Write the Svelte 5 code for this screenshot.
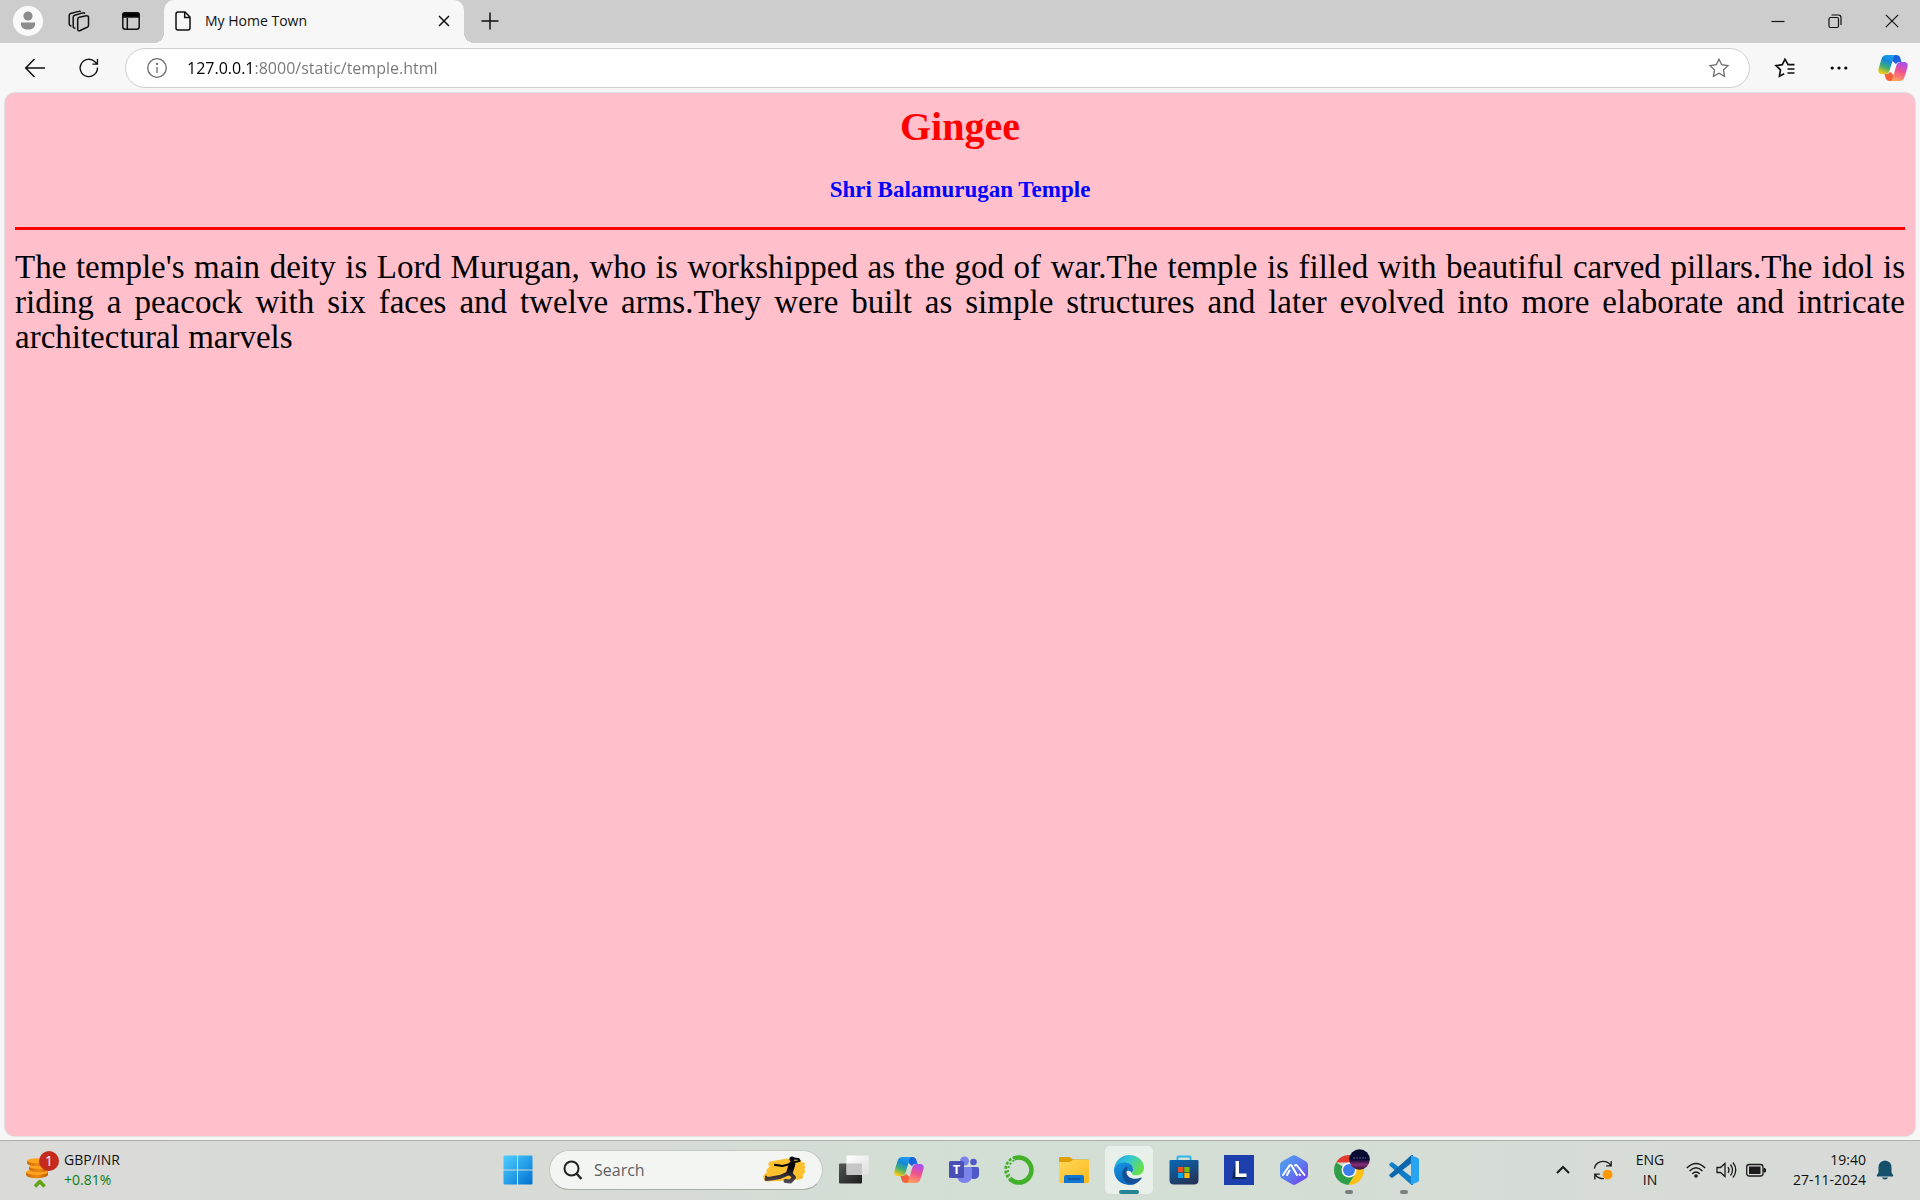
<script>
  let address = $state('127.0.0.1:8000/static/temple.html');
  let query = $state('');
</script>

{#snippet copilot(id)}
  <svg class="i30" viewBox="0 0 30 30" aria-hidden="true">
    <defs>
      <linearGradient id="{id}a" x1="0.6" y1="0" x2="0.2" y2="1">
        <stop offset="0" stop-color="#1b9df0" /><stop offset=".3" stop-color="#1488d8" />
        <stop offset=".62" stop-color="#3fae76" /><stop offset=".95" stop-color="#f2cb12" />
      </linearGradient>
      <linearGradient id="{id}b" x1="0.6" y1="0" x2="0.3" y2="1">
        <stop offset="0" stop-color="#a850f0" /><stop offset=".45" stop-color="#ee5090" />
        <stop offset="1" stop-color="#ffa45c" />
      </linearGradient>
      <linearGradient id="{id}c" x1="0" y1="0" x2="1" y2="1">
        <stop offset="0" stop-color="#1455d8" /><stop offset="1" stop-color="#2272e8" />
      </linearGradient>
    </defs>
    <path d="M14 2h4c3 0 4 1.500 4.700 4l.9 3.200c-3-.4-4.500 0-5.600 2L14.500 8z" fill="url(#{id}c)" />
    <path d="M16 28h-4c-3 0-4-1.500-4.700-4l-.9-3.200c3 .4 4.500 0 5.600-2L15.500 22z" fill="#f4603a" />
    <path d="M8.500 2H18c-1.500.4-2.200 1.500-2.800 3.600L11.600 17.500C10.800 20 9.400 21 7 21H4C.7 21-.3 18.600.6 15.500l3-9.800C4.400 3.200 6 2 8.500 2z" fill="url(#{id}a)" />
    <path d="M21.500 28H12c1.500-.4 2.200-1.500 2.800-3.600l3.600-11.900c.8-2.500 2.200-3.500 4.600-3.500h3c3.300 0 4.300 2.400 3.400 5.500l-3 9.800c-.8 2.500-2.400 3.700-4.900 3.700z" fill="url(#{id}b)" />
  </svg>
{/snippet}

<div class="screen">
  <header class="strip">
    <button class="profile" aria-label="Profile">
      <svg class="i30" viewBox="0 0 30 30"><circle cx="15" cy="15" r="15" fill="#f9f9f9" /><circle cx="15" cy="10" r="4.600" fill="#8c8c8c" /><path d="M8 16.500h14v2c0 3-3 5-7 5s-7-2-7-5z" fill="#8c8c8c" /></svg>
    </button>
    <button class="slot" aria-label="Workspaces">
      <svg class="i22 line" viewBox="0 0 22 22">
        <path d="M11.200 7.200l7-1.400q2.500-.2 2.300 1.600v8q0 1.400-1.300 1.900l-7 3.200q-2.500.8-2.500-1.300V9.200q0-1.600 1.500-2z" />
        <path d="M7.500 18.300q-2.500-.2-2.300-2V7.200q0-1.500 1.500-2l8-2.300q1.600-.4 2.300.7" />
        <path d="M3.500 16.200Q1 15.500 1.200 13.700V5.500q0-1.400 1.400-2l8.200-2.100q1.200-.4 2 .4" />
      </svg>
    </button>
    <button class="slot" aria-label="Tab actions">
      <svg class="i18 line" viewBox="0 0 18 18"><rect x=".8" y="1" width="16.400" height="16.200" rx="2.500" /><path d="M5.300 6v11" /><path d="M.8 5V3Q.8.700 3 .7h12q2.200 0 2.200 2.300v2z" fill="#000" /></svg>
    </button>
    <div class="tab">
      <svg class="page line" viewBox="0 0 16 20"><path d="M10 1H3Q1 1 1 3v14q0 2 2 2h10q2 0 2-2V6zM9.700 1v5.500H15" /></svg>
      <span class="tab-title">My Home Town</span>
      <button class="tab-close" aria-label="Close tab"><svg class="i12 line" viewBox="0 0 12 12"><path d="M1 1l10 10M11 1L1 11" /></svg></button>
    </div>
    <button class="slot" aria-label="New tab"><svg class="i18 line" viewBox="0 0 18 18"><path d="M9 .5v17M.5 9h17" /></svg></button>
    <div class="caption">
      <button aria-label="Minimise"><svg class="i14 line thin" viewBox="0 0 14 14"><path d="M.5 7.500h13" /></svg></button>
      <button aria-label="Restore"><svg class="i14 line thin" viewBox="0 0 14 14"><rect x="1" y="3.500" width="9.500" height="10" rx="1.500" /><path d="M3.500 1h7Q13 1 13 3.500v7.500" /></svg></button>
      <button aria-label="Close"><svg class="i14 line thin" viewBox="0 0 14 14"><path d="M.8.8l12.400 12.400M13.200.8L.8 13.200" /></svg></button>
    </div>
  </header>

  <nav class="toolbar" aria-label="Browser toolbar">
    <button class="tool" aria-label="Back"><svg class="i20 line" viewBox="0 0 20 20"><path d="M9.500 1L.7 10l8.800 9M.7 10H20" /></svg></button>
    <button class="tool" aria-label="Refresh"><svg class="i20 line" viewBox="0 0 22 22"><path d="M20.300 10.500A9.500 9.500 0 1 1 17.500 4.200l2.300 2.200M20.300 1v5.700h-5.600" /></svg></button>
    <div class="address">
      <button aria-label="Site information"><svg class="i20 grey" viewBox="0 0 20 20"><circle cx="10" cy="10" r="9.300" /><path d="M10 9v6" /><circle cx="10" cy="6" r=".5" /></svg></button>
      <input class="url" type="text" aria-label="Address" bind:value={address} />
      <button aria-label="Add to favourites"><svg class="i20 grey" viewBox="0 0 20 20"><path d="M10 1.200l2.700 5.500 6.300.9-4.500 4.300 1 6.300-5.500-3-5.500 3 1-6.300L1 7.600l6.300-.9z" /></svg></button>
    </div>
    <button class="tool" aria-label="Favourites"><svg class="i20 line bold" viewBox="0 0 20 20"><path d="M19.500 6.700h-6.400L10 1.200 7.300 6.700 1 7.600l4.500 4.300-1 6.300 4.700-2.400M12.500 11h7M12.500 15h7" /></svg></button>
    <button class="tool" aria-label="Settings and more"><svg class="i18" viewBox="0 0 18 18"><circle cx="2.200" cy="9" r="1.600" /><circle cx="9" cy="9" r="1.600" /><circle cx="15.800" cy="9" r="1.600" /></svg></button>
    <button class="tool" aria-label="Copilot">{@render copilot('top')}</button>
  </nav>

  <main class="page-view">
    <h1>Gingee</h1>
    <h2>Shri Balamurugan Temple</h2>
    <hr />
    <p>The temple's main deity is Lord Murugan, who is workshipped as the god of war.The temple is filled with beautiful carved pillars.The idol is riding a peacock with six faces and twelve arms.They were built as simple structures and later evolved into more elaborate and intricate architectural marvels</p>
  </main>

  <footer class="taskbar">
    <button class="widget">
      <svg class="coins" viewBox="0 0 34 38" aria-hidden="true">
        <defs><linearGradient id="coin" x1="0" y1="0" x2="1" y2="0"><stop offset="0" stop-color="#c96a08" /><stop offset=".5" stop-color="#ee8a14" /><stop offset="1" stop-color="#c05f00" /></linearGradient></defs>
        <path d="M0 21v3c2 4.500 20 4 22 0v-4z" fill="url(#coin)" /><ellipse cx="11" cy="21" rx="11" ry="3" fill="#ffa21f" />
        <path d="M3 16v2.500c2 3.500 18 3.500 20 0V15z" fill="url(#coin)" /><ellipse cx="13.500" cy="15.500" rx="10.500" ry="2.500" fill="#ffa21f" />
        <path d="M1 10v2.500c2 3.500 18 3.500 20 0V10z" fill="url(#coin)" /><ellipse cx="11" cy="9.800" rx="10" ry="2.500" fill="#ffa21f" />
        <path d="M9 35.500l4.800-5 4.800 5" fill="none" stroke="#62a318" stroke-width="3.500" stroke-linejoin="round" />
        <circle cx="23" cy="10" r="10" fill="#c42b1c" />
        <text x="23" y="15" text-anchor="middle" fill="#fff" font-size="14">1</text>
      </svg>
      <span class="rate"><span>GBP/INR</span><span class="up">+0.81%</span></span>
    </button>

    <div class="apps">
      <button class="app" aria-label="Start">
        <svg class="i30" viewBox="0 0 30 30"><defs><linearGradient id="win" x1="0" y1="0" x2="1" y2="1"><stop offset="0" stop-color="#4fd0ff" /><stop offset="1" stop-color="#0070d2" /></linearGradient></defs><path fill="url(#win)" d="M1.500.5H14v14H.5v-13q0-1 1-1zM15 .5h13.500q1 0 1 1v13H15zM.5 15.500H14v14H1.500q-1 0-1-1zM15 15.500h14.500v13q0 1-1 1H15z" /></svg>
      </button>
      <label class="search">
        <svg class="i20" viewBox="0 0 20 20"><circle cx="8.500" cy="8.500" r="7" fill="none" stroke="#222" stroke-width="2" /><path d="M13.500 13.500l5 5.500" stroke="#222" stroke-width="2.400" /></svg>
        <input type="text" aria-label="Search" placeholder="Search" bind:value={query} />
        <svg class="kick" viewBox="0 0 44 28" aria-hidden="true">
          <defs><linearGradient id="kick" gradientUnits="userSpaceOnUse" x1="0" y1="0" x2="0" y2="28"><stop offset=".4" stop-color="#050505" /><stop offset="1" stop-color="#5a5162" /></linearGradient></defs>
          <path d="M6 6Q13 4 25 2.500q2 0 1 2l11-.5q3 .5 1 2.500l3 0q2 1 0 3 3 1 0 4 2 1 1 3-3 2-2 4 1 2-4 3l-13 1-19 1q-4-.5-3-3l-1-2q2-4 5-4-3-1-1-3 1-2 3-3-3-2-1-4z" fill="#fdc02f" />
          <g fill="none" stroke="url(#kick)" stroke-linecap="round" stroke-linejoin="round"><path d="M27.500 8l-8 2-7.500-1.200" stroke-width="2.200" /><path d="M29 6.500l7.500-1.500-1-2-5-.5" stroke-width="2.200" /><path d="M29 8.500l-2.500 8" stroke-width="6.500" /><path d="M25 17.500l-8 3.500-9 1.500-4.500.5" stroke-width="4" /><path d="M3 20.500l1.500 2.500" stroke-width="2" /><path d="M27 17l4 4.500-3.500 4-5-.5" stroke-width="4" /></g>
          <circle cx="29" cy="3" r="2.600" fill="#090909" />
        </svg>
      </label>
      <button class="app" aria-label="Task view"><svg class="i30" viewBox="0 0 30 30"><defs><linearGradient id="tv" x1="0" y1="0" x2="1" y2="1"><stop offset="0" stop-color="#555" /><stop offset="1" stop-color="#1c1c1c" /></linearGradient><linearGradient id="tw" x1="0" y1="0" x2="1" y2="1"><stop offset="0" stop-color="#fff" /><stop offset="1" stop-color="#ddd" /></linearGradient></defs><rect y="8.500" width="23" height="20" rx="1" fill="url(#tv)" /><rect x="7.500" y=".5" width="22.500" height="19.500" rx="1" fill="url(#tw)" /><path d="M7.500 8.500H23V20H7.500z" fill="#bdbdbd" opacity=".8" /></svg></button>
      <button class="app" aria-label="Copilot">{@render copilot('bar')}</button>
      <button class="app" aria-label="Microsoft Teams"><svg class="i30" viewBox="0 0 30 30"><circle cx="24.500" cy="7" r="3.300" fill="#5059c9" /><path d="M19 12h9.500q1.500 0 1.500 1.500V19c0 3.500-2 5-5 5s-5-2-6-5z" fill="#5059c9" /><circle cx="15.500" cy="6" r="4.500" fill="#7b83eb" /><path d="M9 12h12.500q1.500 0 1.500 1.500V20c0 5-3 8-7.500 8S8 25 8 20z" fill="#7b83eb" /><rect y="6" width="15" height="17" rx="1.500" fill="#4850b5" /><text x="7.500" y="19" text-anchor="middle" fill="#fff" font-size="13" font-weight="700">T</text></svg></button>
      <button class="app" aria-label="Anaconda"><svg class="i30" viewBox="0 0 30 30"><path d="M10 3.500A12.500 12.500 0 1 1 6.500 24.200" fill="none" stroke="#43b02a" stroke-width="4.600" /><path d="M7 26q-5-4.500-5.500-11Q2 7 8 3.500l4-2" fill="none" stroke="#43b02a" stroke-width="2.600" stroke-dasharray="3 1.500" /><path d="M8 24q-4-4-4-9 .5-6 6.500-10" fill="none" stroke="#43b02a" stroke-width="2" stroke-dasharray="2 2" /></svg></button>
      <button class="app" aria-label="File Explorer"><svg class="i30" viewBox="0 0 30 30"><defs><linearGradient id="fold" x1="0" y1="0" x2="1" y2="1"><stop offset="0" stop-color="#ffd75a" /><stop offset="1" stop-color="#fcb91e" /></linearGradient></defs><path d="M1 2h9q1 0 2 1l2 1.500h15q1 0 1 1V10H0V3q0-1 1-1z" fill="#dfa006" /><path d="M0 7h11l3-2h16v22q0 1-1 1H1q-1 0-1-1z" fill="url(#fold)" /><path d="M5 28v-6q0-2 2-2h16q2 0 2 2v6z" fill="#1176cf" /><path d="M9 24h12" stroke="#0b4f96" stroke-width="1.500" /></svg></button>
      <button class="app current" aria-label="Microsoft Edge"><svg class="i30" viewBox="0 0 30 30"><defs><linearGradient id="e1" x1="0" y1="0" x2="1" y2=".5"><stop offset="0" stop-color="#1c9de0" /><stop offset=".45" stop-color="#31c5d8" /><stop offset="1" stop-color="#66e04e" /></linearGradient><linearGradient id="e2" x1="0" y1="0" x2=".6" y2="1"><stop offset="0" stop-color="#1599e4" /><stop offset="1" stop-color="#0b63b8" /></linearGradient></defs><path d="M.3 13C1.500 5.500 7.500 0 15 0c9 0 15 6 15 12.500 0 5-3.600 7.800-7.500 7.800-3 0-5-1-4.700-2.400.3-1 1.200-1.500 1.200-3.300 0-3-3.500-6-8-6C6.500 8.600 2 10 .3 13z" fill="url(#e1)" /><path d="M0 15C.2 10.500 5 7.600 10.500 7.600c5 0 8.500 3.200 8.500 7 0 1.800-1 2.500-1.200 3.300-1.500-3-6.500-3-6.800 1.600-.3 5 5 9 9.500 9.800C9 32 0 25 0 15z" fill="url(#e2)" /><path d="M13 11.500c-3.500 1.500-5.500 5-4.500 9.500 1.200 5 6 8.300 11.500 8.300 3-1 5.600-3.200 7.500-5.700.5-.8 0-1.300-.8-.9-6.700 3-14.200-.2-14.200-5.700 0-2.500 1.700-4 .5-5.500z" fill="#124f96" /></svg></button>
      <button class="app" aria-label="Microsoft Store"><svg class="i30" viewBox="0 0 30 30"><defs><linearGradient id="st" x1="0" y1="0" x2=".5" y2="1"><stop offset="0" stop-color="#0869b8" /><stop offset="1" stop-color="#24365c" /></linearGradient></defs><path d="M8.500 6V2.500q0-1 1-1h11q1 0 1 1V6" fill="none" stroke="#2bb6ee" stroke-width="2" /><path d="M.5 6q0-1 1-1h27q1 0 1 1v19q0 4.500-4.500 4.500H5Q.5 29.500.5 25z" fill="url(#st)" /><path d="M9 12h5.300v5.300H9z" fill="#f25022" /><path d="M15.300 12h5.300v5.300h-5.300z" fill="#7fba00" /><path d="M9 18h5.300v5H9z" fill="#00a4ef" /><path d="M15.300 18h5.300v5h-5.300z" fill="#ffb900" /></svg></button>
      <button class="app" aria-label="L application"><svg class="i30" viewBox="0 0 30 30"><path d="M0 0h30v30H0z" fill="#1d3fae" /><path d="M11.500 6L8 24h13l1.500-2-8-2z" fill="#0d2a4c" /><path d="M11.500 6h3.500v12.500h7.500V22h-11z" fill="#fff" /></svg></button>
      <button class="app" aria-label="AI assistant"><svg class="i30" viewBox="0 0 30 30"><defs><linearGradient id="hx" x1="0" y1="0" x2="1" y2="1"><stop offset="0" stop-color="#4ba6ee" /><stop offset=".5" stop-color="#5c7cf0" /><stop offset="1" stop-color="#7838ea" /></linearGradient></defs><path d="M13 .8q2-1.200 4 0L27 6.500q2 1.200 2 3.500v10q0 2.300-2 3.500l-10 5.700q-2 1.200-4 0L3 23.500Q1 22.300 1 20V10q0-2.300 2-3.500z" fill="url(#hx)" /><path d="M4 20l6.500-9.500q1-1 2 0L18 20M10.500 15.500L8 20M16 10.500q1-1 2 0L25.500 20M20.500 19.500l.5.5" fill="none" stroke="#fff" stroke-width="2" stroke-linecap="round" stroke-linejoin="round" /></svg></button>
      <button class="app running" aria-label="Google Chrome">
        <svg class="chrome" viewBox="0 0 36 36"><path d="M2 13.500A15 15 0 0 1 28 13.500H15z" fill="#e33b2e" /><path d="M2 13.500A15 15 0 0 0 14.500 36L21.500 25 15 21z" fill="#2f9e49" /><path d="M28 13.500A15 15 0 0 1 14.500 36l7-11.500L20 13.500z" fill="#fbc116" /><circle cx="15" cy="21" r="7.500" fill="#fff" /><circle cx="15" cy="21" r="6" fill="#3b7ded" />
          <defs><linearGradient id="av" x1="0" y1="0" x2="0" y2="1"><stop offset=".5" stop-color="#0a0b33" /><stop offset=".75" stop-color="#8a2c78" /><stop offset="1" stop-color="#2b1638" /></linearGradient></defs>
          <circle cx="25.500" cy="10.500" r="10.300" fill="url(#av)" /><path d="M19 9h13" stroke="#34345e" stroke-width="2" stroke-dasharray="2 1" /></svg>
      </button>
      <button class="app running" aria-label="Visual Studio Code"><svg class="i30" viewBox="0 0 30 30"><path d="M2 7.500q.8-.7 1.800 0L24 23v7h-1.500L.5 10.500q-.8-.8 0-1.500z" fill="#0f7fca" /><path d="M2 22.500q.8.700 1.800 0L24 7V0h-1.500L.5 19.500q-.8.800 0 1.500z" fill="#0a67ad" /><path d="M22 .3L28.800 3q1.200.6 1.200 2v20q0 1.400-1.200 2L22 29.700z" fill="#27a5f2" /></svg></button>
    </div>

    <div class="tray">
      <button class="chev" aria-label="Show hidden icons"><svg class="i14" viewBox="0 0 14 14"><path d="M1 10l6-6 6 6" fill="none" stroke="#1b1b1b" stroke-width="2" /></svg></button>
      <button class="sync" aria-label="Updates"><svg class="i20" viewBox="0 0 22 22"><g fill="none" stroke="#1b1b1b" stroke-width="1.500"><path d="M1.500 9.500C2 4 7 1.500 11 1.500c4 0 7 2 8.500 4.500M20 1v5.500h-5.500M12 20.500c-5 0-8-2-9.500-4.500M2 21.500V15.500h5.500" /></g><circle cx="16" cy="16" r="5.400" fill="#ff9800" /></svg></button>
      <button class="lang"><span>ENG</span><span>IN</span></button>
      <button class="status" aria-label="Network, volume and battery">
        <svg class="i20" viewBox="0 0 20 20"><g fill="none" stroke="#1b1b1b" stroke-width="1.400"><path d="M.8 8q9.200-9 18.400 0M3.500 11q6.500-6.500 13 0M6.300 13.700q3.700-3.600 7.400 0" /></g><circle cx="10" cy="16" r="1.800" fill="#1b1b1b" /></svg>
        <svg class="i20" viewBox="0 0 20 20"><path d="M1 7.500h3.500L9 3.500v13l-4.500-4H1zM12 7q2 3 0 6M14.500 4.500q4 5.500 0 11M17 2.500q5.500 7.500 0 15" fill="none" stroke="#1b1b1b" stroke-width="1.300" /></svg>
        <svg class="i20" viewBox="0 0 20 20"><rect x=".7" y="4.500" width="16.300" height="11.500" rx="2.500" fill="none" stroke="#1b1b1b" stroke-width="1.300" /><path d="M3 6.500h11.500v7.500H3zM17.500 8h1q1.500 0 1.500 1.500v1.500q0 1.500-1.500 1.500h-1z" fill="#1b1b1b" /></svg>
      </button>
      <button class="clock"><time datetime="2024-11-27T19:40"><span>19:40</span><span>27-11-2024</span></time></button>
      <button class="bell" aria-label="Notifications"><svg class="i20" viewBox="0 0 20 20"><path d="M10 .5q6.300.5 6.500 7v5l1.800 3q.3 1-.8 1h-15q-1.100 0-.8-1l1.800-3v-5Q3.700 1 10 .5zM7 17.500h6q-.5 2-3 2t-3-2z" fill="#15506a" /></svg></button>
    </div>
  </footer>
</div>

<style>
  :global(body) { margin: 0; }
  .screen { min-height: 100vh; display: flex; flex-direction: column; background: #f7f7f7; font-family: "Open Sans", "Noto Sans", sans-serif; color: #111; }
  button { border: 0; padding: 0; margin: 0; background: none; font: inherit; color: inherit; display: flex; align-items: center; justify-content: center; }
  input { border: 0; outline: 0; padding: 0; min-width: 0; font: inherit; background: none; }
  svg { display: block; flex: none; overflow: visible; }
  .i12 { width: 12px; height: 12px; }
  .i14 { width: 14px; height: 14px; }
  .i18 { width: 18px; height: 18px; }
  .i20 { width: 20px; height: 20px; }
  .i22 { width: 22px; height: 22px; }
  .i30 { width: 30px; height: 30px; }
  .line { fill: none; stroke: #111; stroke-width: 1.500; }
  .thin { stroke-width: 1.200; }
  .bold { stroke-width: 1.700; }
  .grey { fill: none; stroke: #6b6b6b; stroke-width: 1.300; }

  .strip { display: flex; align-items: stretch; height: 43px; padding-left: 3px; background: #cdcdcd; }
  .strip > button, .caption button { padding-bottom: 1px; }
  .profile { width: 50px; }
  .slot { width: 52px; }
  .tab { position: relative; box-sizing: border-box; width: 300px; margin-left: 7px; padding: 0 14px 2px 11px; display: flex; align-items: center; background: #f7f7f7; border-radius: 10px 10px 0 0; }
  .tab::before, .tab::after { content: ""; position: absolute; bottom: 0; width: 10px; height: 10px; }
  .tab::before { left: -10px; background: radial-gradient(circle at 0 0, #cdcdcd 10px, #f7f7f7 10px); }
  .tab::after { right: -10px; background: radial-gradient(circle at 100% 0, #cdcdcd 10px, #f7f7f7 10px); }
  .page { width: 16px; height: 20px; }
  .tab-title { flex: 1; margin-left: 14px; font-size: 14px; line-height: 20px; }
  .caption { margin-left: auto; display: flex; }
  .caption button { width: 57px; }

  .toolbar { display: flex; align-items: center; height: 50px; padding: 0 0 0 8px; }
  .tool { width: 54px; height: 40px; }
  .address { flex: 1; margin: 0 8px 0 9px; height: 38px; display: flex; align-items: center; gap: 20px; padding: 0 20px 0 21px; border: 1px solid #cfcfcf; border-radius: 20px; background: #fff; }
  .url { flex: 1; font-size: 16px; line-height: 24px; color: transparent; background: linear-gradient(90deg, #000 68px, #767676 68px); background-clip: text; -webkit-background-clip: text; }

  .page-view { flex: 1; margin: 0 5px 4px; padding: 0 10px; border-radius: 10px; background: #ffc0cb; box-shadow: 0 0 2px #aaa; font-family: "Liberation Serif", "Times New Roman", serif; color: #000; }
  h1 { margin: 11px 0 0; font-size: 40px; line-height: 46px; text-align: center; color: red; }
  h2 { margin: 26px 0 0; font-size: 23px; line-height: 28px; text-align: center; color: blue; }
  hr { margin: 23px 0 0; border: 0; height: 3px; background: red; }
  p { margin: 20px 0 0; font-size: 33px; line-height: 35px; text-align: justify; }

  .taskbar { display: grid; grid-template-columns: 1fr auto 1fr; align-items: center; height: 58px; padding: 0 0 1px 2px; border-top: 1px solid #adb0ad; background: linear-gradient(90deg, #dadbd9, #d8dad6 25%, #d2dfd4 52%, #d5ddd5 75%, #d8dad7); }
  .widget { justify-self: start; margin-left: 24px; gap: 4px; }
  .coins { width: 34px; height: 38px; }
  .rate, .lang, time { display: flex; flex-direction: column; font-size: 14px; line-height: 20px; }
  .rate { text-align: left; }
  .up { color: #0f7b0f; }
  .apps { display: flex; align-items: center; gap: 7px; }
  .app { position: relative; width: 48px; height: 48px; border-radius: 5px; }
  .current { background: #e9f0ea; }
  .current::after, .running::after { content: ""; position: absolute; bottom: 0; left: 20px; width: 8px; height: 4px; border-radius: 2px; background: #7c7f7c; }
  .current::after { left: 14px; width: 20px; background: #248494; }
  .running .chrome { width: 36px; height: 36px; margin: 0 0 6px 6px; }
  .search { box-sizing: border-box; width: 274px; height: 40px; display: flex; align-items: center; padding: 0 15px 0 13px; border: 1px solid #c4c8c4; border-bottom-color: #a9ada9; border-radius: 20px; background: #f3f5f3; }
  .search input { flex: 1; margin-left: 11px; font-size: 16px; line-height: 24px; }
  .search input::placeholder { color: #5f5f5f; opacity: 1; }
  .kick { width: 44px; height: 28px; }
  .tray { justify-self: end; display: flex; align-items: center; margin-right: 25px; }
  .chev { width: 40px; height: 48px; }
  .sync { width: 40px; height: 48px; }
  .lang { width: 54px; text-align: center; }
  .status { width: 80px; gap: 10px; margin: 0 12px 0 9px; }
  .clock { width: 88px; text-align: right; justify-content: flex-end; }
  .bell { margin-left: 9px; height: 48px; }
</style>
